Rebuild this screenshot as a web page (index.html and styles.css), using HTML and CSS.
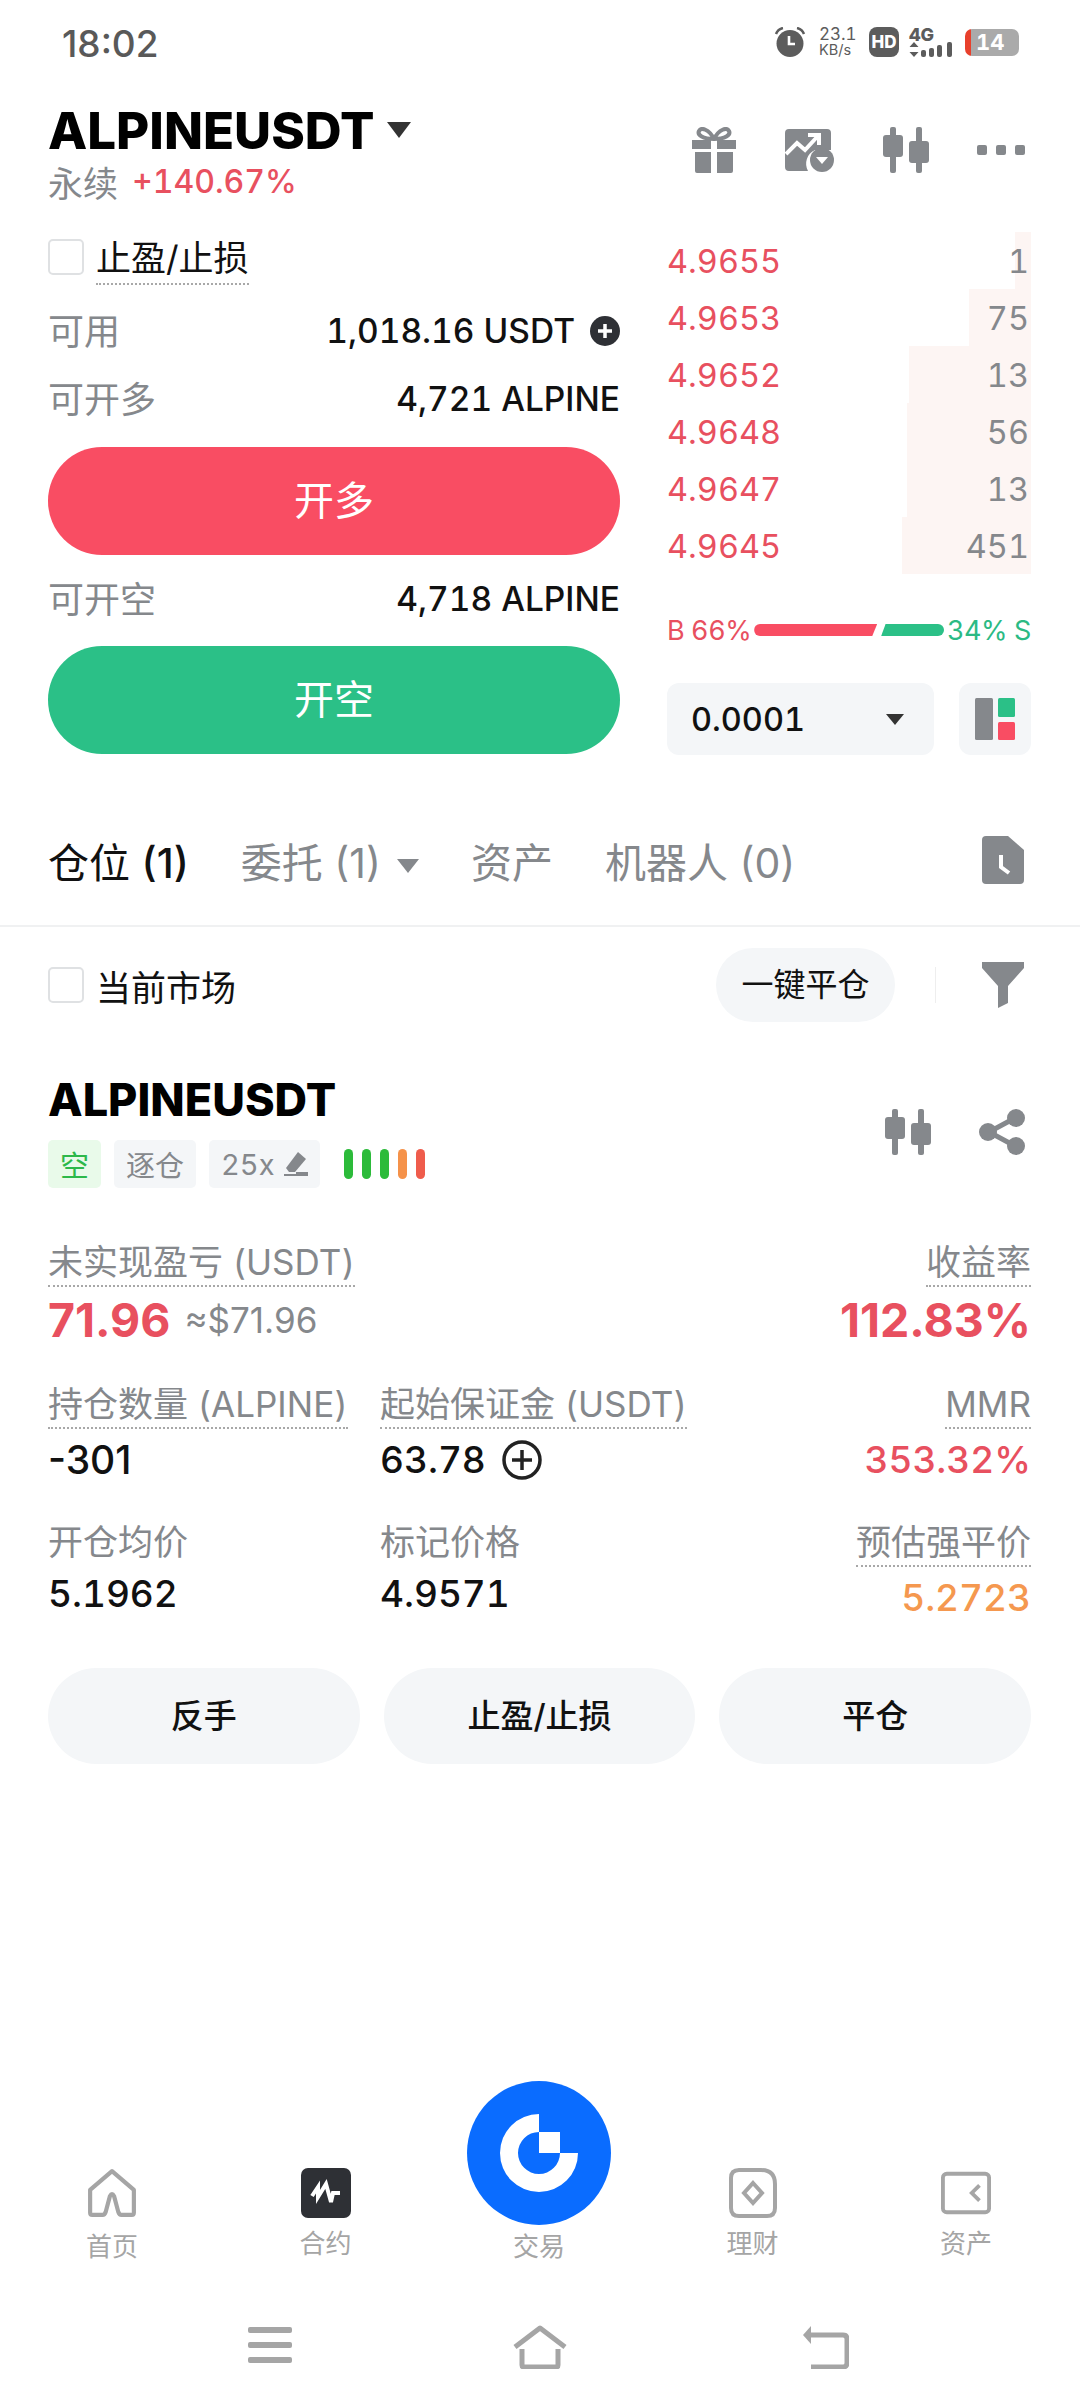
FILE: index.html
```html
<!DOCTYPE html>
<html lang="zh">
<head>
    <meta charset="UTF-8">
    <meta name="viewport" content="width=device-width, initial-scale=1.0">
    <title>ALPINEUSDT</title>
    <link rel="stylesheet" href="styles.css">
</head>
<body>
    <div class="status-bar">
        <span class="clock">18:02</span>
        <div class="status-icons">
            <svg class="ic-alarm" viewBox="0 0 32 30"><circle cx="16" cy="16.500" r="13.500" fill="#5c5c5c"/><path d="M2 7 Q4 2 9 1 M30 7 Q28 2 23 1" stroke="#5c5c5c" stroke-width="2.500" fill="none"/><path d="M15 9v8h6" stroke="#fff" stroke-width="2.600" fill="none"/></svg>
            <div class="speed"><span>23.1</span><span>KB/s</span></div>
            <div class="hd">HD</div>
            <div class="net">
                <span class="net-label">4G</span>
                <svg class="ic-signal" viewBox="0 0 47 15"><path d="M5 0l4.500 5h-9zM5 15l4.500-5h-9z" fill="#5c5c5c"/><rect x="12" y="8" width="5" height="7" rx="2" fill="#5c5c5c"/><rect x="20" y="6" width="5" height="9" rx="2" fill="#5c5c5c"/><rect x="28" y="3" width="5" height="12" rx="2" fill="#5c5c5c"/><rect x="38" y="0" width="5" height="15" rx="2" fill="#5c5c5c"/></svg>
            </div>
            <div class="battery"><span>14</span></div>
        </div>
    </div>

    <div class="top-bar">
        <div>
            <div class="pair"><span class="pair-name">ALPINEUSDT</span><span class="caret-big"></span></div>
            <div class="pair-sub"><span>永续</span><span class="pair-change">+140.67%</span></div>
        </div>
        <div class="top-icons">
            <svg class="ic" viewBox="0 0 46 46"><path d="M23 12C18 2 10 0 8 4c-2 4 4 8 15 8zM23 12C28 2 36 0 38 4c2 4-4 8-15 8z" fill="none" stroke="#85888c" stroke-width="4"/><path d="M1 13h19v9H1zM26 13h19v9H26zM4 25h16v21H6q-2 0-2-2zM26 25h16v19q0 2-2 2H26z" fill="#85888c"/></svg>
            <svg class="ic ic-wide" viewBox="0 0 50 46"><path d="M4 2h38q4 0 4 4v17H30a15 15 0 0 0-7 21H4q-4 0-4-4V6q0-4 4-4z" fill="#85888c"/><path d="M1 27l11-11 8 7 12-13M23 8h11v10" fill="none" stroke="#fff" stroke-width="4"/><circle cx="37" cy="33" r="12" fill="#85888c"/><path d="M31 30h12l-6 7z" fill="#fff"/></svg>
            <svg class="ic" viewBox="0 0 46 46"><rect x="7" y="0" width="6" height="46" rx="2" fill="#85888c"/><rect x="0" y="8" width="20" height="22" rx="3" fill="#85888c"/><rect x="33" y="0" width="6" height="46" rx="2" fill="#85888c"/><rect x="26" y="14" width="20" height="22" rx="3" fill="#85888c"/></svg>
            <div class="dots"><i></i><i></i><i></i></div>
        </div>
    </div>

    <div class="trade">
        <div class="order-form">
            <div class="check-row"><span class="checkbox"></span><span class="dotted dark">止盈/止损</span></div>
            <div class="form-row avail"><span class="muted">可用</span><span class="form-val">1,018.16 USDT<svg class="ic-plus" viewBox="0 0 30 30"><circle cx="15" cy="15" r="15" fill="#2e3035"/><path d="M15 8v14M8 15h14" stroke="#fff" stroke-width="3.500"/></svg></span></div>
            <div class="form-row"><span class="muted">可开多</span><span class="form-val">4,721 ALPINE</span></div>
            <div class="trade-btn long">开多</div>
            <div class="form-row"><span class="muted">可开空</span><span class="form-val">4,718 ALPINE</span></div>
            <div class="trade-btn short">开空</div>
        </div>

        <div class="book">
            <div class="book-rows">
                <div class="book-row"><div class="depth" style="width:16px"></div><span class="price">4.9655</span><span class="size">1</span></div>
                <div class="book-row"><div class="depth" style="width:62px"></div><span class="price">4.9653</span><span class="size">75</span></div>
                <div class="book-row"><div class="depth" style="width:122px"></div><span class="price">4.9652</span><span class="size">13</span></div>
                <div class="book-row"><div class="depth" style="width:124px"></div><span class="price">4.9648</span><span class="size">56</span></div>
                <div class="book-row"><div class="depth" style="width:124px"></div><span class="price">4.9647</span><span class="size">13</span></div>
                <div class="book-row"><div class="depth" style="width:129px"></div><span class="price">4.9645</span><span class="size">451</span></div>
            </div>
            <div class="ratio">
                <span class="buy-text">B 66%</span>
                <div class="ratio-bar"><div class="ratio-buy"></div><div class="ratio-sell"></div></div>
                <span class="sell-text">34% S</span>
            </div>
            <div class="book-tools">
                <div class="precision"><span>0.0001</span><span class="caret-small"></span></div>
                <div class="layout-btn">
                    <svg viewBox="0 0 40 42" width="40" height="42"><rect x="0" y="0" width="18" height="42" rx="1.500" fill="#85888c"/><rect x="23" y="0" width="17" height="19" rx="1.500" fill="#2bc087"/><rect x="23" y="24" width="17" height="18" rx="1.500" fill="#f94d63"/></svg>
                </div>
            </div>
        </div>
    </div>

    <div class="tabs">
        <span class="tab active">仓位 <b>(1)</b></span>
        <span class="tab">委托 (1)<span class="caret-tab"></span></span>
        <span class="tab">资产</span>
        <span class="tab">机器人 (0)</span>
        <svg class="ic-history" viewBox="0 0 42 48"><path d="M4 0h22l16 14v30q0 4-4 4H4q-4 0-4-4V4q0-4 4-4z" fill="#85888c"/><path d="M19 19v12l8 6" fill="none" stroke="#fff" stroke-width="4"/></svg>
    </div>

    <div class="filter-row">
        <div class="check-row flat"><span class="checkbox"></span><span class="dark">当前市场</span></div>
        <div class="filter-right">
            <div class="close-all">一键平仓</div>
            <span class="vline"></span>
            <svg class="ic-funnel" viewBox="0 0 42 46"><path d="M0 0h42v6L26 24v17l-10 5V24L0 6z" fill="#85888c"/></svg>
        </div>
    </div>

    <div class="position">
        <div class="pos-head">
            <div>
                <div class="pos-name">ALPINEUSDT</div>
                <div class="tags">
                    <span class="tag green">空</span>
                    <span class="tag">逐仓</span>
                    <span class="tag">25x<svg class="ic-edit" viewBox="0 0 24 24"><path d="M14 0l8 7-11 13H5l-3-4z" fill="#85888c"/><path d="M12 20h12v4H12z" fill="#85888c"/><path d="M0 22h24v2H0z" fill="#85888c"/></svg></span>
                    <div class="risk"><i class="g"></i><i class="g"></i><i class="g"></i><i class="o"></i><i class="r"></i></div>
                </div>
            </div>
            <div class="pos-icons">
                <svg class="ic" viewBox="0 0 46 46"><rect x="7" y="0" width="6" height="46" rx="2" fill="#85888c"/><rect x="0" y="8" width="20" height="22" rx="3" fill="#85888c"/><rect x="33" y="0" width="6" height="46" rx="2" fill="#85888c"/><rect x="26" y="14" width="20" height="22" rx="3" fill="#85888c"/></svg>
                <svg class="ic" viewBox="0 0 46 46"><path d="M36 9L10 23l26 14" fill="none" stroke="#85888c" stroke-width="5"/><circle cx="37" cy="9" r="9" fill="#85888c"/><circle cx="9" cy="23" r="9" fill="#85888c"/><circle cx="37" cy="37" r="9" fill="#85888c"/></svg>
            </div>
        </div>

        <div class="stats first">
            <div class="stat wide"><span class="dotted label">未实现盈亏 (USDT)</span><div class="val-line"><span class="big red">71.96</span><span class="approx">≈$71.96</span></div></div>
            <div class="stat right"><span class="dotted label">收益率</span><span class="big red">112.83%</span></div>
        </div>
        <div class="stats">
            <div class="stat"><span class="dotted label">持仓数量 (ALPINE)</span><span class="val plain">-301</span></div>
            <div class="stat"><span class="dotted label">起始保证金 (USDT)</span><span class="val">63.78<svg class="ic-add" viewBox="0 0 40 40"><circle cx="20" cy="20" r="18" fill="none" stroke="#222" stroke-width="3.500"/><path d="M20 10v20M10 20h20" stroke="#222" stroke-width="3.500"/></svg></span></div>
            <div class="stat right"><span class="dotted label">MMR</span><span class="val red">353.32%</span></div>
        </div>
        <div class="stats last">
            <div class="stat"><span class="label">开仓均价</span><span class="val">5.1962</span></div>
            <div class="stat"><span class="label">标记价格</span><span class="val">4.9571</span></div>
            <div class="stat right"><span class="dotted label">预估强平价</span><span class="val orange">5.2723</span></div>
        </div>

        <div class="pos-actions">
            <div class="pos-btn">反手</div>
            <div class="pos-btn">止盈/止损</div>
            <div class="pos-btn">平仓</div>
        </div>
    </div>

    <div class="tabbar">
        <div class="nav-item">
            <svg class="nav-ic" viewBox="0 0 48 46"><path d="M24 2L3 20v22q0 2 2 2h10q2 0 3-3l4-15q2-4 4 0l4 15q1 3 3 3h10q2 0 2-2V20z" fill="none" stroke="#a5a5a5" stroke-width="4" stroke-linejoin="round"/></svg>
            <span>首页</span>
        </div>
        <div class="nav-item up">
            <svg class="nav-ic" viewBox="0 0 50 50"><rect width="50" height="50" rx="7" fill="#2e3035"/><path d="M11 28l6-9v10l8-13 5 18 2-9h7" fill="none" stroke="#fff" stroke-width="4"/></svg>
            <span>合约</span>
        </div>
        <div class="nav-item center">
            <div class="logo">
                <svg viewBox="0 0 144 144" width="144" height="144"><path d="M72 33A39 39 0 1 0 111 72H93A21 21 0 1 1 72 51ZM72 51H93V72H72Z" fill="#fff"/></svg>
            </div>
            <span>交易</span>
        </div>
        <div class="nav-item up">
            <svg class="nav-ic" viewBox="0 0 50 50"><path d="M3 10q0-8 8-8h22q14 0 14 14v24q0 8-8 8H11q-8 0-8-8z" fill="none" stroke="#a5a5a5" stroke-width="4"/><path d="M25 15l9 10-9 10-9-10z" fill="none" stroke="#a5a5a5" stroke-width="4"/></svg>
            <span>理财</span>
        </div>
        <div class="nav-item up">
            <svg class="nav-ic" viewBox="0 0 52 44"><rect x="2" y="2" width="48" height="40" rx="4" fill="none" stroke="#a5a5a5" stroke-width="4"/><path d="M40 14l-8 8 8 8" fill="none" stroke="#a5a5a5" stroke-width="4"/></svg>
            <span>资产</span>
        </div>
    </div>

    <div class="sys-nav">
        <svg class="sys-menu" viewBox="0 0 44 36"><rect width="44" height="6" rx="2" fill="#a5a5a5"/><rect y="15" width="44" height="6" rx="2" fill="#a5a5a5"/><rect y="30" width="44" height="6" rx="2" fill="#a5a5a5"/></svg>
        <svg class="sys-home" viewBox="0 0 56 44"><path d="M3 22L28 3l25 19" fill="none" stroke="#a5a5a5" stroke-width="5" stroke-linejoin="round"/><path d="M10 24v16q0 2 2 2h32q2 0 2-2V24" fill="none" stroke="#a5a5a5" stroke-width="5"/></svg>
        <svg class="sys-back" viewBox="0 0 48 44"><path d="M2 10L10 1v18z" fill="#a5a5a5"/><path d="M6 10h36q4 0 4 4v24q0 4-4 4H10" fill="none" stroke="#a5a5a5" stroke-width="5"/></svg>
    </div>
</body>
</html>
```

FILE: styles.css
```css
* {
    box-sizing: border-box;
}

body {
    margin: 0;
    width: 1080px;
    height: 2408px;
    display: flex;
    flex-direction: column;
    background: #fff;
    color: #111;
    font-family: Inter, "Noto Sans CJK SC", sans-serif;
    font-variant-numeric: tabular-nums;
    overflow: hidden;
}

svg {
    display: block;
    flex: none;
}

/* Status bar */
.status-bar {
    height: 84px;
    padding: 26px 61px 0 62px;
    display: flex;
    justify-content: space-between;
    align-items: flex-start;
}

.clock {
    font-size: 37px;
    line-height: 36px;
    font-weight: 500;
    font-variant-numeric: normal;
    color: #595959;
}

.status-icons {
    display: flex;
    align-items: center;
    height: 32px;
}

.ic-alarm {
    width: 32px;
    height: 30px;
    margin-right: 13px;
}

.speed {
    width: 37px;
    margin-right: 13px;
    display: flex;
    flex-direction: column;
    font-size: 17px;
    line-height: 16px;
    color: #5c5c5c;
    white-space: nowrap;
}

.speed span + span {
    font-size: 14.500px;
}

.hd {
    width: 30px;
    height: 30px;
    border-radius: 8px;
    background: #5c5c5c;
    color: #fff;
    font-size: 17px;
    font-weight: 800;
    line-height: 30px;
    text-align: center;
    margin-right: 10px;
}

.net {
    width: 47px;
    margin-right: 9px;
}

.net-label {
    display: block;
    font-size: 18px;
    line-height: 15px;
    font-weight: 800;
    color: #5c5c5c;
}

.ic-signal {
    width: 47px;
    height: 15px;
}

.battery {
    width: 54px;
    height: 27px;
    border-radius: 7px;
    background: linear-gradient(90deg, #e8402c 0 6px, #aaa 6px);
    color: #fff;
    font-size: 22px;
    font-weight: 700;
    line-height: 27px;
    padding-left: 11px;
}

/* Top bar */
.top-bar {
    padding: 17px 55px 0 48px;
    display: flex;
    justify-content: space-between;
    align-items: flex-start;
}

.pair {
    display: flex;
    align-items: center;
    height: 58px;
}

.pair-name {
    font-size: 51px;
    font-weight: 800;
    font-variant-numeric: normal;
    color: #000;
}

.caret-big {
    width: 0;
    height: 0;
    margin-left: 12px;
    border-left: 12px solid transparent;
    border-right: 12px solid transparent;
    border-top: 16px solid #333;
}

.pair-sub {
    display: flex;
    align-items: center;
    gap: 14px;
    height: 44px;
    font-size: 35px;
    color: #85888c;
}

.pair-change {
    font-size: 32px;
    font-weight: 500;
    color: #e8505f;
}

.top-icons {
    display: flex;
    align-items: center;
    gap: 48px;
    padding-top: 26px;
}

.ic {
    width: 46px;
    height: 46px;
}

.ic-wide {
    width: 50px;
}

.dots {
    display: flex;
    gap: 9px;
}

.dots i {
    width: 10px;
    height: 10px;
    border-radius: 2px;
    background: #85888c;
}

/* Order form and book */
.trade {
    margin-top: 25px;
    padding: 0 49px 0 48px;
    display: flex;
    justify-content: space-between;
}

.order-form {
    width: 572px;
}

.check-row {
    display: flex;
    align-items: center;
    gap: 12px;
    height: 58px;
    font-size: 35px;
}

.checkbox {
    width: 36px;
    height: 36px;
    border: 2px solid #dfe1e3;
    border-radius: 5px;
}

.dotted {
    padding-bottom: 2px;
    border-bottom: 2px dotted #a8a8a8;
}

.dark {
    color: #111;
}

.form-row {
    display: flex;
    justify-content: space-between;
    align-items: center;
    height: 68px;
    font-size: 36px;
}

.avail {
    margin-top: 9px;
}

.muted {
    color: #85888c;
}

.form-val {
    display: flex;
    align-items: center;
    gap: 15px;
    padding-top: 4px;
    font-size: 33.500px;
    font-weight: 500;
    color: #111;
}

.ic-plus {
    width: 30px;
    height: 30px;
}

.trade-btn {
    height: 108px;
    border-radius: 54px;
    color: #fff;
    font-size: 40px;
    line-height: 108px;
    text-align: center;
}

.long {
    margin-top: 16px;
    background: #f94d63;
}

.short {
    margin-top: 15px;
    background: #2bc087;
}

.trade-btn.long + .form-row {
    margin-top: 8px;
}

.book {
    width: 364px;
    padding-top: 4px;
}

.book-row {
    position: relative;
    height: 57px;
    display: flex;
    justify-content: space-between;
    align-items: center;
    padding: 2px 2px 0 0;
    font-size: 32.500px;
}

.depth {
    position: absolute;
    top: 0;
    right: 0;
    bottom: 0;
    background: #fdf5f3;
}

.price,
.size {
    position: relative;
}

.price {
    color: #e8505f;
}

.size {
    color: #85888c;
}

.ratio {
    margin-top: 36px;
    display: flex;
    align-items: center;
    justify-content: space-between;
    height: 40px;
    font-size: 27px;
    letter-spacing: -0.4px;
}

.buy-text {
    color: #e8505f;
}

.sell-text {
    color: #2bba84;
}

.ratio-bar {
    width: 190px;
    height: 12px;
    display: flex;
    gap: 4px;
}

.ratio-buy {
    width: 123px;
    background: #f94d63;
    border-radius: 6px 0 0 6px;
    clip-path: polygon(0 0, 100% 0, 96% 100%, 0 100%);
}

.ratio-sell {
    flex: 1;
    background: #2bc087;
    border-radius: 0 6px 6px 0;
    clip-path: polygon(7% 0, 100% 0, 100% 100%, 0 100%);
}

.book-tools {
    margin-top: 33px;
    display: flex;
    justify-content: space-between;
}

.precision {
    width: 267px;
    height: 72px;
    padding: 0 30px 0 24px;
    border-radius: 12px;
    background: #f4f6f8;
    display: flex;
    align-items: center;
    justify-content: space-between;
    font-size: 32.500px;
    font-weight: 500;
    color: #111;
}

.caret-small {
    width: 0;
    height: 0;
    border-left: 9px solid transparent;
    border-right: 9px solid transparent;
    border-top: 11px solid #333;
}

.layout-btn {
    width: 72px;
    height: 72px;
    border-radius: 12px;
    background: #f4f6f8;
    display: flex;
    align-items: center;
    justify-content: center;
}

/* Tabs */
.tabs {
    margin-top: 65px;
    height: 107px;
    padding: 0 56px 25px 48px;
    display: flex;
    align-items: center;
    gap: 52px;
    border-bottom: 2px solid #f0f1f2;
    font-size: 41px;
    font-variant-numeric: normal;
    color: #85888c;
}

.tab {
    white-space: nowrap;
}

.tab b {
    font-weight: 500;
}

.tab.active {
    color: #111;
}

.caret-tab {
    display: inline-block;
    width: 0;
    height: 0;
    margin-left: 16px;
    vertical-align: 5px;
    border-left: 11px solid transparent;
    border-right: 11px solid transparent;
    border-top: 14px solid #85888c;
}

.ic-history {
    width: 42px;
    height: 48px;
    margin-left: auto;
}

.filter-row {
    height: 74px;
    margin-top: 21px;
    padding: 0 56px 0 48px;
    display: flex;
    justify-content: space-between;
    align-items: center;
}

.check-row.flat {
    font-size: 35px;
}

.filter-right {
    display: flex;
    align-items: center;
}

.close-all {
    width: 179px;
    height: 74px;
    border-radius: 37px;
    background: #f4f6f8;
    font-size: 32px;
    line-height: 74px;
    text-align: center;
}

.vline {
    width: 1px;
    height: 36px;
    margin: 0 46px 0 40px;
    background: #eee;
}

.ic-funnel {
    width: 42px;
    height: 46px;
}

/* Position card */
.position {
    padding: 0 49px 0 48px;
    margin-top: 50px;
}

.pos-head {
    display: flex;
    justify-content: space-between;
    align-items: center;
}

.pos-name {
    font-size: 45px;
    font-weight: 800;
    line-height: 56px;
    font-variant-numeric: normal;
    color: #000;
}

.tags {
    margin-top: 12px;
    display: flex;
    gap: 13px;
    align-items: center;
}

.tag {
    height: 48px;
    padding: 0 12px;
    border-radius: 5px;
    background: #f4f6f8;
    display: flex;
    align-items: center;
    gap: 10px;
    font-size: 29px;
    color: #85888c;
}

.tag.green {
    background: #e9faea;
    color: #2db84a;
}

.ic-edit {
    width: 24px;
    height: 24px;
}

.risk {
    display: flex;
    gap: 9px;
    margin-left: 11px;
}

.risk i {
    width: 9px;
    height: 30px;
    border-radius: 4.500px;
}

.risk .g {
    background: #2cbb3a;
}

.risk .o {
    background: #f5924a;
}

.risk .r {
    background: #ef5c4c;
}

.pos-icons {
    display: flex;
    gap: 48px;
    margin-right: 6px;
    margin-top: 4px;
}

.stats {
    margin-top: 37px;
    display: grid;
    grid-template-columns: 332px 1fr auto;
}

.stats.first {
    grid-template-columns: 1fr auto;
    margin-top: 53px;
}

.stats.last {
    margin-top: 37px;
}

.stat {
    display: flex;
    flex-direction: column;
    align-items: flex-start;
    gap: 7px;
}

.stat.right {
    align-items: flex-end;
}

.label {
    font-size: 35px;
    line-height: 42px;
    color: #85888c;
}

.val-line {
    display: flex;
    align-items: center;
    gap: 14px;
}

.big {
    font-size: 46.500px;
    line-height: 52px;
    font-weight: 700;
    font-variant-numeric: normal;
}

.approx {
    font-size: 35px;
    font-variant-numeric: normal;
    color: #85888c;
}

.val {
    display: flex;
    align-items: center;
    gap: 16px;
    font-size: 37px;
    line-height: 48px;
    font-weight: 500;
    color: #111;
}

.val.plain {
    font-size: 39px;
    font-variant-numeric: normal;
}

.red {
    color: #e8505f;
}

.orange {
    color: #f5984f;
}

.ic-add {
    width: 40px;
    height: 40px;
}

.pos-actions {
    margin-top: 46px;
    display: flex;
    gap: 24px;
}

.pos-btn {
    flex: 1;
    height: 96px;
    border-radius: 48px;
    background: #f4f6f8;
    font-size: 33px;
    font-weight: 500;
    line-height: 96px;
    text-align: center;
    color: #111;
}

/* Bottom navigation */
.tabbar {
    margin-top: auto;
    height: 194px;
    display: flex;
    justify-content: space-between;
    align-items: flex-end;
    padding: 0 54px 24px 52px;
}

.nav-item {
    width: 120px;
    display: flex;
    flex-direction: column;
    align-items: center;
    gap: 10px;
    font-size: 26px;
    line-height: 38px;
    color: #a5a5a5;
}

.nav-item.up {
    gap: 7px;
    padding-bottom: 3px;
}

.nav-item.center {
    gap: 3px;
}

.nav-ic {
    width: 50px;
    height: 50px;
}

.logo {
    width: 144px;
    height: 144px;
    border-radius: 50%;
    background: #0a6cff;
}

.sys-nav {
    height: 118px;
    padding: 35px 0 0 248px;
    display: flex;
    align-items: flex-start;
}

.sys-menu {
    width: 44px;
    height: 36px;
    margin-top: 2px;
}

.sys-home {
    width: 56px;
    height: 44px;
    margin-left: 220px;
}

.sys-back {
    width: 48px;
    height: 44px;
    margin-left: 233px;
}
```
